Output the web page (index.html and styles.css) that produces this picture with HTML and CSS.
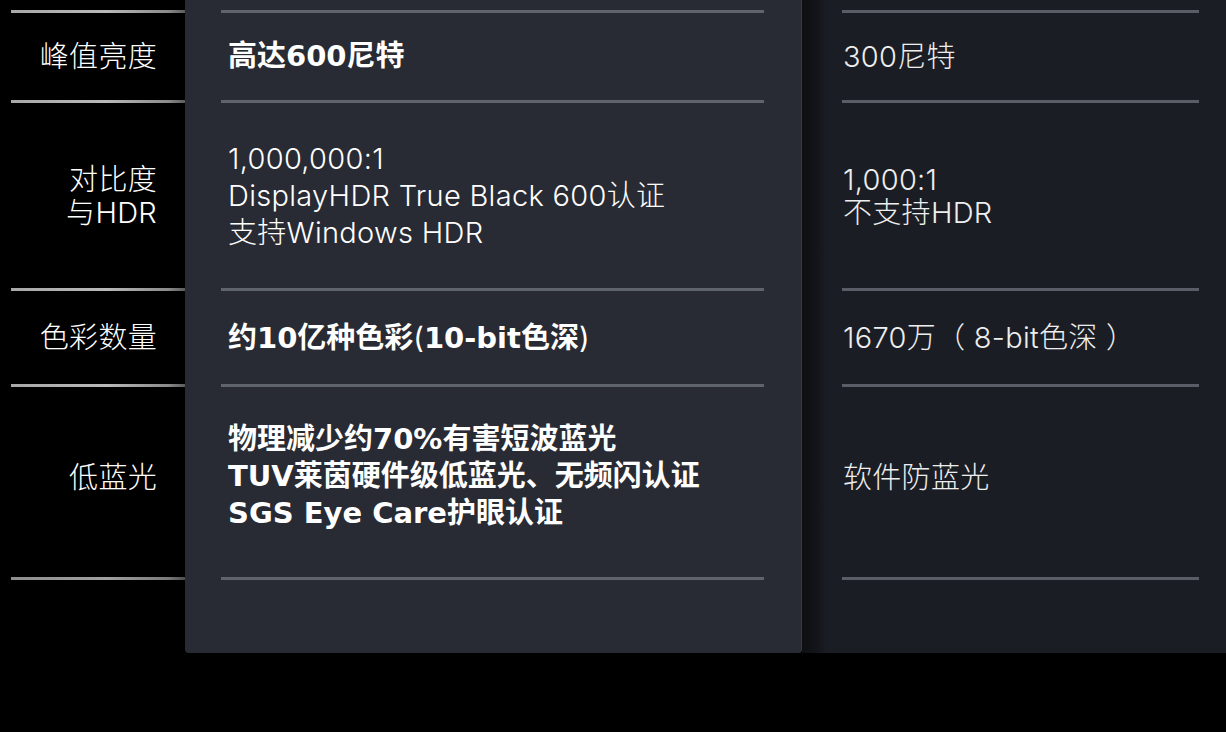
FILE: index.html
```html
<!DOCTYPE html>
<html lang="zh-CN">
<head>
    <meta charset="UTF-8">
    <meta name="viewport" content="width=device-width, initial-scale=1.0">
    <title>显示器参数对比</title>
    <link rel="stylesheet" href="styles.css">
</head>
<body>
    <div class="compare">
        <!-- Row labels -->
        <div class="col labels">
            <div class="cell row-peak">峰值亮度</div>
            <div class="cell row-hdr">对比度<br>与HDR</div>
            <div class="cell row-color">色彩数量</div>
            <div class="cell row-blue">低蓝光</div>
            <div class="cell row-end"></div>
        </div>

        <!-- Our monitor -->
        <div class="col ours">
            <div class="cell row-peak strong">高达600尼特</div>
            <div class="cell row-hdr">1,000,000:1<br>DisplayHDR True Black 600认证<br>支持Windows HDR</div>
            <div class="cell row-color strong">约10亿种色彩<span class="thin">(</span>10-bit色深<span class="thin">)</span></div>
            <div class="cell row-blue strong">物理减少约70%有害短波蓝光<br>TUV莱茵硬件级低蓝光、无频闪认证<br>SGS Eye Care护眼认证</div>
            <div class="cell row-end"></div>
        </div>

        <!-- Ordinary monitor -->
        <div class="col theirs">
            <div class="cell row-peak">300尼特</div>
            <div class="cell row-hdr">1,000:1<br>不支持HDR</div>
            <div class="cell row-color">1670万（ 8-bit色深 ）</div>
            <div class="cell row-blue">软件防蓝光</div>
            <div class="cell row-end"></div>
        </div>
    </div>
</body>
</html>
```

FILE: styles.css
```css
body { margin: 0; background-color: #000; color: #fff; font-family: Inter, "Noto Sans CJK SC", sans-serif; font-weight: 300; }
.compare { display: flex; padding-top: 10px; }
.col { display: flex; flex-direction: column; }

/* Cells share the same row heights across all three columns */
.cell { display: flex; align-items: center; border-top: 3px solid #5f636b; font-size: 29px; line-height: 33px; letter-spacing: 0.3px; }
.row-peak { height: 87px; }
.row-hdr { height: 185px; }
.row-color { height: 93px; }
.row-blue { height: 180px; padding-bottom: 10px; }
.row-end { height: 73px; }

/* Label column */
.labels { width: 185px; margin-top: -10px; padding-top: 10px; }
.labels .cell {
    margin-left: 11px;
    justify-content: flex-end;
    text-align: right;
    padding-right: 28px;
    border-image: linear-gradient(90deg, #a8a8a8, #b9b9b9 55%, #8a8a8a 90%, #5a5a5a) 1;
}
.labels .row-end { border-image: linear-gradient(90deg, #8e8e8e, #a0a0a0 55%, #7a7a7a 90%, #4a4a4a) 1; }

/* Middle card */
.ours {
    width: 616px;
    margin-top: -10px;
    padding-top: 10px;
    background-color: #282b34;
    border-right: 1px solid #363942;
    border-radius: 0 0 4px 4px;
}
.ours .cell { margin: 0 37px 0 36px; padding-left: 7px; line-height: 37px; }
.ours .strong { display: block; letter-spacing: 0; font-family: "DejaVu Sans", "Noto Sans CJK SC", sans-serif; font-weight: 700; }
.ours .row-peak.strong { line-height: 87px; }
.ours .row-color.strong { line-height: 93px; }
.ours .row-blue.strong { padding-top: 34px; height: 146px; }
.ours .thin { font-family: Inter, sans-serif; font-weight: 400; }

/* Right card */
.theirs {
    flex: 1;
    margin-top: -10px;
    padding-top: 10px;
    background: linear-gradient(90deg, #0d0f12 0, #121419 14px, #1a1c23 24px, #1b1d24 30px);
}
.theirs .cell { margin: 0 27px 0 40px; padding-left: 1px; border-top-color: #5a5d65; color: #eeeeee; }
```
